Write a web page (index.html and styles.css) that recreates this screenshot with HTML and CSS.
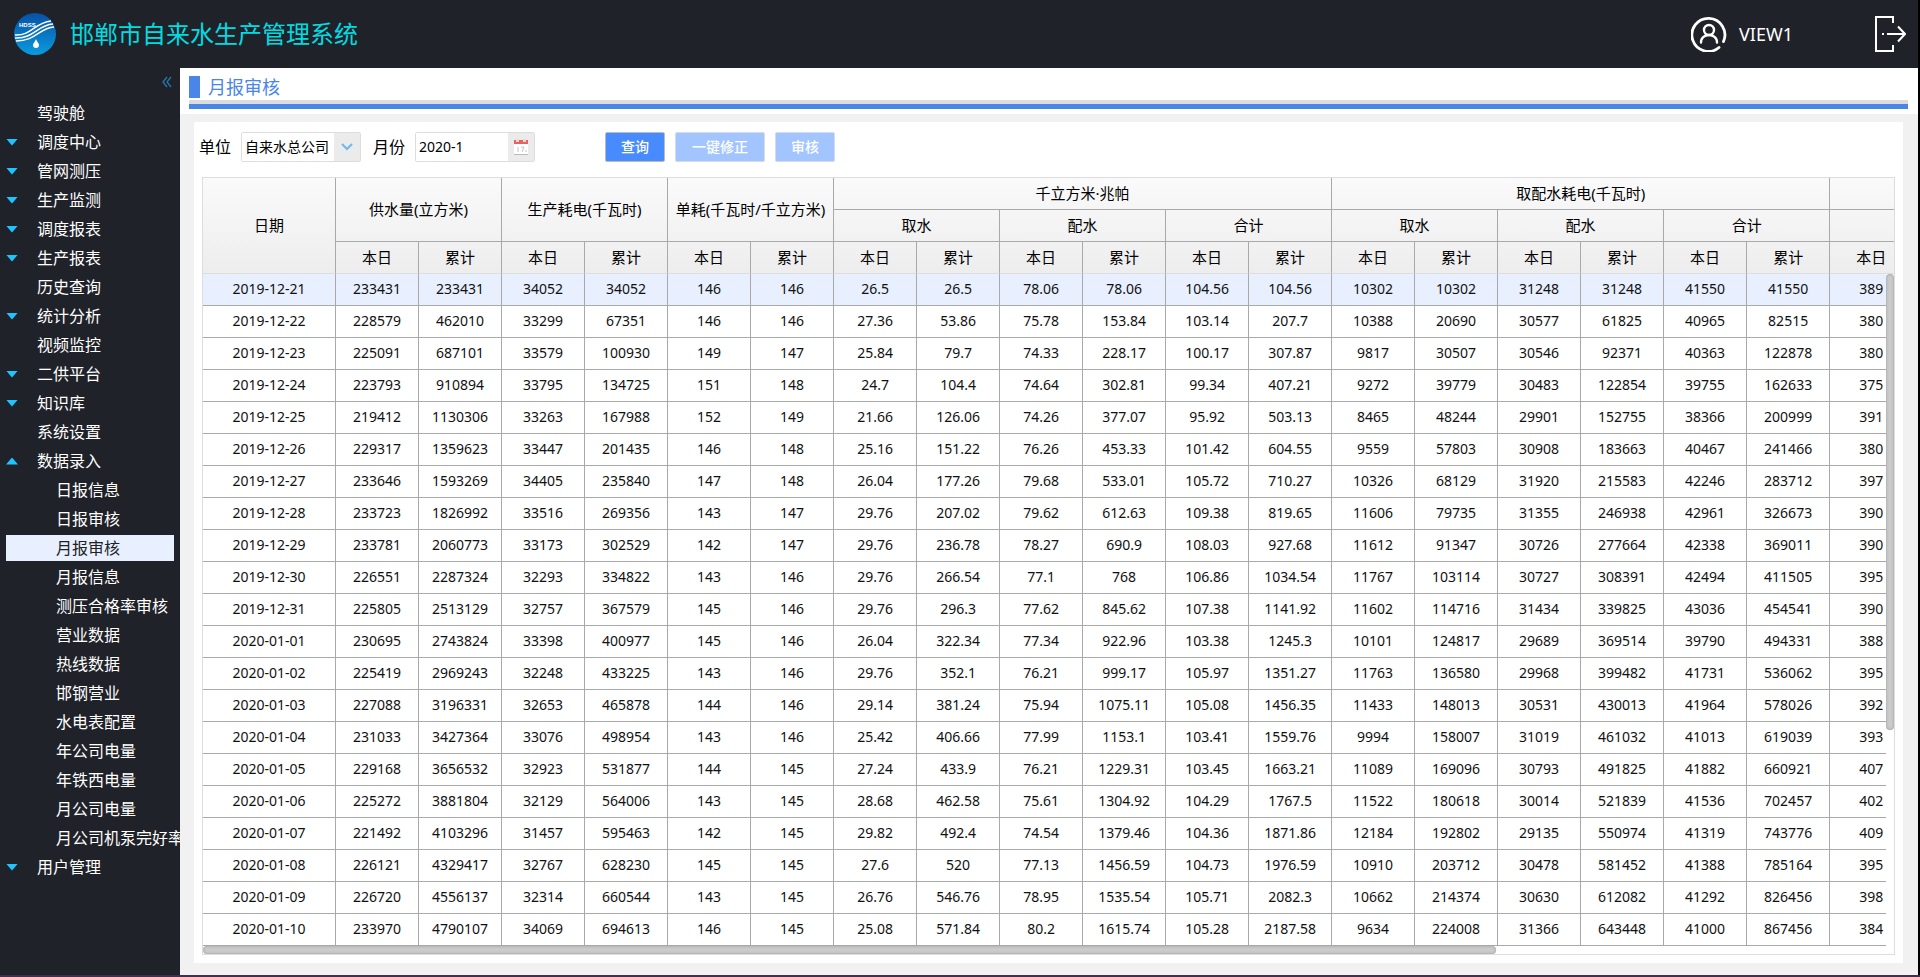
FILE: index.html
```html
<!DOCTYPE html>
<html lang="zh-CN">
<head>
<meta charset="utf-8">
<title>邯郸市自来水生产管理系统</title>
<link rel="stylesheet" href="styles.css">
</head>
<body>
<div class="app">
  <header class="topbar">
    <svg class="logo" viewBox="0 0 42 42" role="img" aria-label="HDSS">
      <defs><linearGradient id="lg" x1="0" y1="0" x2="0" y2="1"><stop offset="0" stop-color="#0850a5"/><stop offset="1" stop-color="#0a9be0"/></linearGradient></defs>
      <circle cx="21" cy="21" r="21" fill="url(#lg)"/>
      <text class="logo-text" x="5" y="14">HDSS</text>
      <g fill="none" stroke="#fff" stroke-width="1.5">
        <path d="M1 22C17 23 20 10 37 8"/>
        <path d="M1 25C20 26 23 12 39 11"/>
        <path d="M2 28C22 28 25 15 40 14"/>
      </g>
      <path d="M22 26c1 3 3 4 3 6a3 3 0 0 1-6 0c0-2 2-3 3-6z" fill="#fff"/>
    </svg>
    <h1 class="brand">邯郸市自来水生产管理系统</h1>
    <div class="user">
      <svg class="user-icon" viewBox="0 0 36 36" fill="none" stroke="#fff" stroke-linecap="round" aria-hidden="true">
        <path d="M28 31.500A16.500 16.500 0 1 1 32.500 25.500" stroke-width="2.800"/>
        <circle cx="18" cy="14" r="5" stroke-width="2.400"/>
        <path d="M10 26.500c0-10 16-10 16 0" stroke-width="2.400"/>
      </svg>
      <span>VIEW1</span>
    </div>
    <button class="logout" type="button" aria-label="退出">
      <svg viewBox="0 0 32 36" fill="none" stroke="#fff" stroke-width="2" aria-hidden="true">
        <path d="M19 7V1H2v34h17v-6M13 18h17M24 10.500l7 7.500-7 7.500M8 18h2"/>
      </svg>
    </button>
  </header>
  <div class="main">
    <nav class="side">
      <button class="collapse" type="button" aria-label="收起">
        <svg viewBox="0 0 10 10" fill="none" stroke="#2577ae" stroke-width="1.300" aria-hidden="true"><path d="M5 0L1 5l4 5M9 0L5 5l4 5"/></svg>
      </button>
      <ul class="menu">
        <li><a href="#">驾驶舱</a></li>
        <li><a class="down" href="#">调度中心</a></li>
        <li><a class="down" href="#">管网测压</a></li>
        <li><a class="down" href="#">生产监测</a></li>
        <li><a class="down" href="#">调度报表</a></li>
        <li><a class="down" href="#">生产报表</a></li>
        <li><a href="#">历史查询</a></li>
        <li><a class="down" href="#">统计分析</a></li>
        <li><a href="#">视频监控</a></li>
        <li><a class="down" href="#">二供平台</a></li>
        <li><a class="down" href="#">知识库</a></li>
        <li><a href="#">系统设置</a></li>
        <li><a class="up" href="#">数据录入</a>
          <ul class="submenu">
            <li><a href="#">日报信息</a></li>
            <li><a href="#">日报审核</a></li>
            <li><a class="current" href="#">月报审核</a></li>
            <li><a href="#">月报信息</a></li>
            <li><a href="#">测压合格率审核</a></li>
            <li><a href="#">营业数据</a></li>
            <li><a href="#">热线数据</a></li>
            <li><a href="#">邯钢营业</a></li>
            <li><a href="#">水电表配置</a></li>
            <li><a href="#">年公司电量</a></li>
            <li><a href="#">年铁西电量</a></li>
            <li><a href="#">月公司电量</a></li>
            <li><a href="#">月公司机泵完好率</a></li>
          </ul>
        </li>
        <li><a class="down" href="#">用户管理</a></li>
      </ul>
    </nav>
    <main class="content">
      <div class="page-head"><h2 class="page-title">月报审核</h2></div>
      <section class="panel">
        <form class="filters">
          <label for="unit">单位</label>
          <div class="field">
            <select id="unit"><option>自来水总公司</option></select>
            <span class="field-btn"><svg viewBox="0 0 12 8" width="12" height="8" fill="none" stroke="#6ab8ef" stroke-width="2" aria-hidden="true"><path d="M1 1l5 5 5-5"/></svg></span>
          </div>
          <label for="month">月份</label>
          <div class="field">
            <input id="month" type="text" value="2020-1">
            <span class="field-btn"><svg viewBox="0 0 14 16" width="14" height="16" aria-hidden="true"><path d="M0 5h14v11H0z" fill="#fff"/><path d="M0 15h14v1H0z" fill="#bbb"/><path d="M0 1h14v4H0z" fill="#e8615c"/><path d="M2 0h3v3H2zM9 0h3v3H9z" fill="#e9dada"/><path d="M4 8v5M7 8h3l-2 5M11 12h2" fill="none" stroke="#c4c4c4"/></svg></span>
          </div>
          <div class="actions">
            <button class="btn" type="button">查询</button>
            <button class="btn wide" type="button" disabled>一键修正</button>
            <button class="btn" type="button" disabled>审核</button>
          </div>
        </form>
        <div class="grid">
          <table>
            <colgroup><col class="col-date"><col class="col-num" span="19"></colgroup>
            <thead>
              <tr><th rowspan="3">日期</th><th rowspan="2" colspan="2">供水量(立方米)</th><th rowspan="2" colspan="2">生产耗电(千瓦时)</th><th rowspan="2" colspan="2">单耗(千瓦时/千立方米)</th><th colspan="6">千立方米·兆帕</th><th colspan="6">取配水耗电(千瓦时)</th><th></th></tr>
              <tr><th colspan="2">取水</th><th colspan="2">配水</th><th colspan="2">合计</th><th colspan="2">取水</th><th colspan="2">配水</th><th colspan="2">合计</th><th></th></tr>
              <tr><th>本日</th><th>累计</th><th>本日</th><th>累计</th><th>本日</th><th>累计</th><th>本日</th><th>累计</th><th>本日</th><th>累计</th><th>本日</th><th>累计</th><th>本日</th><th>累计</th><th>本日</th><th>累计</th><th>本日</th><th>累计</th><th>本日</th></tr>
            </thead>
            <tbody id="rows"></tbody>
          </table>
          <div class="vtrack"><div class="vthumb"></div></div>
          <div class="htrack"><div class="hthumb"></div></div>
        </div>
      </section>
    </main>
  </div>
</div>
<script src="app.js"></script>
</body>
</html>
```

FILE: styles.css
```css
* { box-sizing: border-box; }
body {
  margin: 0;
  background: #452b4c;
  font: 14px/20px "Noto Sans", "Noto Sans CJK SC", sans-serif;
  color: #000;
}
button, input, select { font: inherit; }
ul { list-style: none; margin: 0; padding: 0; }
a { color: inherit; text-decoration: none; }

.app {
  min-height: calc(100vh - 2px);
  display: flex;
  flex-direction: column;
  border-right: 2px solid #000;
  background: #20222a;
}
.topbar {
  height: 68px;
  flex: none;
  display: flex;
  align-items: center;
  padding: 0 12px 0 14px;
  color: #fff;
}
.logo { width: 42px; height: 42px; margin-right: 14px; }
.logo-text { font: bold 6px "Liberation Sans", sans-serif; fill: #fff; }
.brand {
  margin: 0;
  font-size: 24px;
  line-height: 32px;
  font-weight: 400;
  color: #00dce0;
}
.user {
  margin-left: auto;
  display: flex;
  align-items: center;
  gap: 12px;
  font-size: 18px;
}
.user-icon { width: 36px; height: 36px; }
.logout {
  margin-left: 81px;
  padding: 0;
  border: 0;
  background: none;
  width: 32px;
  height: 36px;
}
.logout svg { display: block; }

.main { flex: 1; display: flex; }
.side {
  width: 180px;
  flex: none;
  padding: 8px 6px 0;
  overflow: hidden;
  color: #fff;
  font-size: 16px;
}
.collapse {
  display: block;
  margin: 0 0 12px auto;
  padding: 0;
  border: 0;
  background: none;
  width: 12px;
  height: 12px;
}
.collapse svg { display: block; width: 10px; height: 12px; }
.menu a {
  display: flex;
  align-items: center;
  height: 26px;
  margin-bottom: 3px;
  padding-left: 31px;
  white-space: nowrap;
}
.menu .submenu a { padding-left: 50px; }
.menu .down, .menu .up { padding-left: 0; }
.down::before, .up::before {
  content: "";
  flex: none;
  width: 12px;
  height: 7px;
  margin-right: 19px;
  background: #1fc4ff;
  clip-path: polygon(0 0, 100% 0, 50% 100%);
}
.up::before { clip-path: polygon(50% 0, 100% 100%, 0 100%); }
.menu .current { background: #e8f0ff; color: #222; }

.content {
  flex: 1;
  min-width: 0;
  display: flex;
  flex-direction: column;
  background: #f1f1f1;
}
.page-head { background: #fff; padding: 8px 10px 5px 9px; }
.page-title {
  margin: 0;
  font-size: 18px;
  font-weight: 400;
  line-height: 22px;
  color: #4a86e8;
  border-bottom: 5px solid #4a86e8;
  display: flex;
  flex-wrap: wrap;
}
.page-title::before {
  content: "";
  width: 11px;
  height: 22px;
  margin-right: 8px;
  background: #4a86e8;
}
.page-title::after {
  content: "";
  width: 100%;
  height: 4px;
  margin-top: 2px;
  background: #dcdcdc;
}
.panel {
  flex: 1;
  margin: 8px 15px 12px 14px;
  padding: 10px 8px 8px;
  background: #fff;
}
.filters {
  display: flex;
  align-items: center;
  margin: 0 0 15px -3px;
}
.filters label { font-size: 16px; }
.field {
  width: 120px;
  height: 30px;
  margin: 0 12px 0 10px;
  display: flex;
  border: 1px solid #ddd;
  border-radius: 2px;
  overflow: hidden;
}
.field select, .field input {
  flex: 1;
  min-width: 0;
  appearance: none;
  border: 0;
  padding: 0 0 0 3px;
  background: #fff;
  color: #000;
}
.field-btn {
  width: 26px;
  background: #ebebeb;
  display: flex;
  align-items: center;
  justify-content: center;
}
.actions { display: flex; gap: 10px; margin-left: 58px; }
.btn {
  width: 60px;
  height: 30px;
  padding: 0;
  border: 1px solid #bbb;
  border-radius: 2px;
  background: #478bff;
  color: #fff;
  font-weight: 500;
}
.btn.wide { width: 90px; }
.btn:disabled { background: #a3c5ff; border-color: #d5dbe6; }

.grid {
  position: relative;
  overflow: hidden;
  border: 1px solid #ddd;
  padding-bottom: 8px;
}
table {
  width: 1710px;
  table-layout: fixed;
  border-collapse: separate;
  border-spacing: 0;
}
.col-date { width: 133px; }
.col-num { width: 83px; }
thead { background: linear-gradient(#fafafa, #ededed); }
th, td {
  height: 32px;
  padding: 0 0 2px;
  text-align: center;
  font-weight: 400;
  white-space: nowrap;
  border-right: 1px solid #a9a9a9;
  border-bottom: 1px solid #a9a9a9;
}
th { font-size: 15px; }
td { color: #111; }
thead tr:last-child th, thead tr:first-child th:first-child { border-bottom-color: #ddd; }
tbody tr:first-child { background: #e8f0ff; }
.vtrack {
  position: absolute;
  top: 96px;
  right: 0;
  bottom: 0;
  width: 8px;
  background: #fff;
}
.vthumb, .hthumb {
  border-radius: 4px;
  background: #cbcbcb;
  box-shadow: inset 0 0 3px #999;
}
.vthumb { width: 8px; height: 67%; }
.htrack {
  position: absolute;
  left: 0;
  right: 8px;
  bottom: 0;
  height: 8px;
  background: #fff;
}
.hthumb { height: 8px; width: 76.8%; }
```

FILE: app.js
```js
// date, then day / cumulative pairs for every measure, then the day value of the next group
const records = `
2019-12-21 233431 233431 34052 34052 146 146 26.5 26.5 78.06 78.06 104.56 104.56 10302 10302 31248 31248 41550 41550 389
2019-12-22 228579 462010 33299 67351 146 146 27.36 53.86 75.78 153.84 103.14 207.7 10388 20690 30577 61825 40965 82515 380
2019-12-23 225091 687101 33579 100930 149 147 25.84 79.7 74.33 228.17 100.17 307.87 9817 30507 30546 92371 40363 122878 380
2019-12-24 223793 910894 33795 134725 151 148 24.7 104.4 74.64 302.81 99.34 407.21 9272 39779 30483 122854 39755 162633 375
2019-12-25 219412 1130306 33263 167988 152 149 21.66 126.06 74.26 377.07 95.92 503.13 8465 48244 29901 152755 38366 200999 391
2019-12-26 229317 1359623 33447 201435 146 148 25.16 151.22 76.26 453.33 101.42 604.55 9559 57803 30908 183663 40467 241466 380
2019-12-27 233646 1593269 34405 235840 147 148 26.04 177.26 79.68 533.01 105.72 710.27 10326 68129 31920 215583 42246 283712 397
2019-12-28 233723 1826992 33516 269356 143 147 29.76 207.02 79.62 612.63 109.38 819.65 11606 79735 31355 246938 42961 326673 390
2019-12-29 233781 2060773 33173 302529 142 147 29.76 236.78 78.27 690.9 108.03 927.68 11612 91347 30726 277664 42338 369011 390
2019-12-30 226551 2287324 32293 334822 143 146 29.76 266.54 77.1 768 106.86 1034.54 11767 103114 30727 308391 42494 411505 395
2019-12-31 225805 2513129 32757 367579 145 146 29.76 296.3 77.62 845.62 107.38 1141.92 11602 114716 31434 339825 43036 454541 390
2020-01-01 230695 2743824 33398 400977 145 146 26.04 322.34 77.34 922.96 103.38 1245.3 10101 124817 29689 369514 39790 494331 388
2020-01-02 225419 2969243 32248 433225 143 146 29.76 352.1 76.21 999.17 105.97 1351.27 11763 136580 29968 399482 41731 536062 395
2020-01-03 227088 3196331 32653 465878 144 146 29.14 381.24 75.94 1075.11 105.08 1456.35 11433 148013 30531 430013 41964 578026 392
2020-01-04 231033 3427364 33076 498954 143 146 25.42 406.66 77.99 1153.1 103.41 1559.76 9994 158007 31019 461032 41013 619039 393
2020-01-05 229168 3656532 32923 531877 144 145 27.24 433.9 76.21 1229.31 103.45 1663.21 11089 169096 30793 491825 41882 660921 407
2020-01-06 225272 3881804 32129 564006 143 145 28.68 462.58 75.61 1304.92 104.29 1767.5 11522 180618 30014 521839 41536 702457 402
2020-01-07 221492 4103296 31457 595463 142 145 29.82 492.4 74.54 1379.46 104.36 1871.86 12184 192802 29135 550974 41319 743776 409
2020-01-08 226121 4329417 32767 628230 145 145 27.6 520 77.13 1456.59 104.73 1976.59 10910 203712 30478 581452 41388 785164 395
2020-01-09 226720 4556137 32314 660544 143 145 26.76 546.76 78.95 1535.54 105.71 2082.3 10662 214374 30630 612082 41292 826456 398
2020-01-10 233970 4790107 34069 694613 146 145 25.08 571.84 80.2 1615.74 105.28 2187.58 9634 224008 31366 643448 41000 867456 384
`.trim().split("\n");

const body = document.getElementById("rows");
for (const record of records) {
  const row = body.insertRow();
  for (const value of record.split(" ")) row.insertCell().textContent = value;
}
```
